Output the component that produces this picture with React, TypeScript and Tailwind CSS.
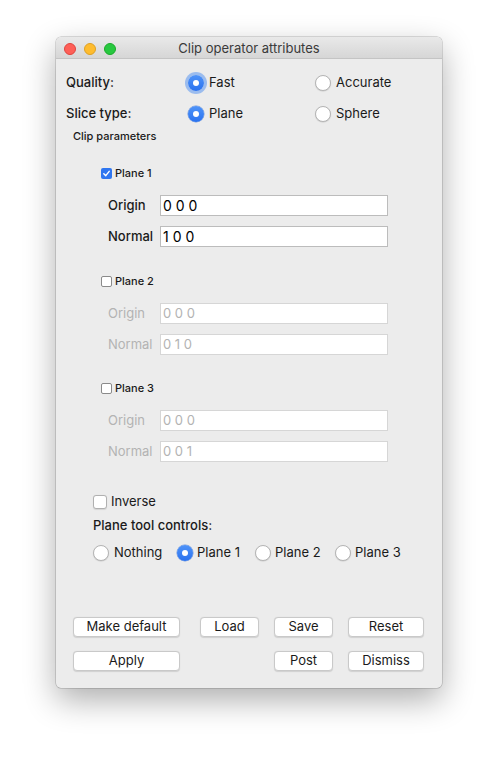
import React from "react";

const font = { fontFamily: "Inter, 'Liberation Sans', sans-serif" };

function Radio({ on, focus }: { on?: boolean; focus?: boolean }) {
  if (on) {
    return (
      <span
        className={
          "flex h-[16px] w-[16px] shrink-0 items-center justify-center rounded-full bg-gradient-to-b from-[#4f93f8] to-[#2a72ef] " +
          (focus ? "shadow-[0_0_0_3px_rgba(90,150,240,0.55)]" : "shadow-[0_0_0_0.5px_rgba(30,90,200,0.6)]")
        }
      >
        <span className="h-[6px] w-[6px] rounded-full bg-white" />
      </span>
    );
  }
  return (
    <span className="h-[16px] w-[16px] shrink-0 rounded-full border border-[#b4b4b4] bg-white shadow-[0_0.5px_1px_rgba(0,0,0,0.15)]" />
  );
}

function SmallCheck({ on }: { on?: boolean }) {
  if (on) {
    return (
      <span className="flex h-[11px] w-[11px] items-center justify-center rounded-[2px] bg-[#2f76f0]">
        <svg width="9" height="9" viewBox="0 0 10 10">
          <path d="M2 5.2 L4.2 7.4 L8 2.6" fill="none" stroke="white" strokeWidth="1.6" strokeLinecap="round" strokeLinejoin="round" />
        </svg>
      </span>
    );
  }
  return <span className="h-[11px] w-[11px] rounded-[2px] border border-[#8a8a8a] bg-white" />;
}

function Field({ label, value, enabled }: { label: string; value: string; enabled?: boolean }) {
  return (
    <div className="flex h-[21px] items-center">
      <span
        className={
          "w-[52px] pl-[52px] box-content text-[13px] " +
          (enabled ? "font-medium text-[#1a1a1a]" : "text-[#b3b3b3]")
        }
      >
        {label}
      </span>
      <div
        className={
          "flex h-[21px] w-[228px] items-center bg-white pl-[2px] " +
          (enabled ? "border border-[#bcbcbc] text-[14px] text-black" : "border border-[#d6d6d6] text-[13px] text-[#b3b3b3]")
        }
      >
        {value}
      </div>
    </div>
  );
}

function PlaneBlock({ name, origin, normal, on, top }: { name: string; origin: string; normal: string; on?: boolean; top: string }) {
  return (
    <div className={top}>
      <div className="flex h-[14px] items-center gap-[3px] pl-[45px]">
        <SmallCheck on={on} />
        <span className="text-[11px] font-medium text-[#1a1a1a]">{name}</span>
      </div>
      <div className="mt-[15px]">
        <Field label="Origin" value={origin} enabled={on} />
      </div>
      <div className="mt-[10px]">
        <Field label="Normal" value={normal} enabled={on} />
      </div>
    </div>
  );
}

function Btn({ label, w }: { label: string; w: string }) {
  return (
    <div
      className={
        "flex h-[20px] items-center justify-center rounded-[4px] border border-[#c9c9c9] bg-white text-[13px] text-[#1a1a1a] shadow-[0_0.5px_1px_rgba(0,0,0,0.12)] " +
        w
      }
    >
      {label}
    </div>
  );
}

export default function App() {
  return (
    <div className="min-h-[762px] bg-white pl-[56px] pt-[37px]" style={font}>
      <div className="flex h-[651px] w-[386px] flex-col overflow-hidden rounded-[5px] bg-[#ececec] shadow-[0_0_0_0.5px_rgba(0,0,0,0.25),0_12px_32px_rgba(0,0,0,0.32)]">
        {/* title bar */}
        <div className="relative flex h-[22px] shrink-0 items-center justify-center border-b border-[#c4c4c4] bg-gradient-to-b from-[#e9e9e9] to-[#d6d6d6] pt-[3px]">
          <div className="absolute left-[8px] top-[6px] flex gap-[8px]">
            <span className="h-[12px] w-[12px] rounded-full border border-[#e0443e] bg-[#fe5f57]" />
            <span className="h-[12px] w-[12px] rounded-full border border-[#dea123] bg-[#febc2e]" />
            <span className="h-[12px] w-[12px] rounded-full border border-[#1aab29] bg-[#28c840]" />
          </div>
          <span className="text-[13px] text-[#3a3a3a]">Clip operator attributes</span>
        </div>

        <div className="flex flex-col">
          {/* quality */}
          <div className="mt-[13px] flex h-[22px] items-center text-[13px] text-[#1a1a1a]">
            <span className="w-[132px] pl-[10px] font-medium">Quality:</span>
            <div className="flex w-[127px] items-center gap-[5px]">
              <Radio on focus />
              <span>Fast</span>
            </div>
            <div className="flex items-center gap-[5px]">
              <Radio />
              <span>Accurate</span>
            </div>
          </div>
          {/* slice type */}
          <div className="mt-[9px] flex h-[22px] items-center text-[13px] text-[#1a1a1a]">
            <span className="w-[132px] pl-[10px] font-medium">Slice type:</span>
            <div className="flex w-[127px] items-center gap-[5px]">
              <Radio on />
              <span>Plane</span>
            </div>
            <div className="flex items-center gap-[5px]">
              <Radio />
              <span>Sphere</span>
            </div>
          </div>
          <div className="mt-[4px] flex h-[14px] items-center pl-[17px] text-[11px] font-medium text-[#1a1a1a]">
            Clip parameters
          </div>

          <PlaneBlock top="mt-[23px]" name="Plane 1" origin="0 0 0" normal="1 0 0" on />
          <PlaneBlock top="mt-[27px]" name="Plane 2" origin="0 0 0" normal="0 1 0" />
          <PlaneBlock top="mt-[26px]" name="Plane 3" origin="0 0 0" normal="0 0 1" />

          {/* inverse */}
          <div className="mt-[32px] flex h-[16px] items-center gap-[4px] pl-[37px] text-[13px] text-[#1a1a1a]">
            <span className="h-[14px] w-[14px] rounded-[3px] border border-[#b0b0b0] bg-white shadow-[0_0.5px_1px_rgba(0,0,0,0.1)]" />
            <span>Inverse</span>
          </div>
          <div className="mt-[8px] flex h-[16px] items-center pl-[37px] text-[13px] font-medium text-[#1a1a1a]">
            Plane tool controls:
          </div>
          <div className="mt-[10px] flex h-[18px] items-center pl-[37px] text-[13px] text-[#1a1a1a]">
            <div className="flex w-[84px] items-center gap-[5px]">
              <Radio />
              <span>Nothing</span>
            </div>
            <div className="flex w-[78px] items-center gap-[4px]">
              <Radio on />
              <span>Plane 1</span>
            </div>
            <div className="flex w-[80px] items-center gap-[4px]">
              <Radio />
              <span>Plane 2</span>
            </div>
            <div className="flex items-center gap-[4px]">
              <Radio />
              <span>Plane 3</span>
            </div>
          </div>

          {/* buttons */}
          <div className="mt-[55px] flex pl-[17px]">
            <Btn label="Make default" w="w-[107px]" />
            <div className="ml-[20px]"><Btn label="Load" w="w-[59px]" /></div>
            <div className="ml-[15px]"><Btn label="Save" w="w-[59px]" /></div>
            <div className="ml-[15px]"><Btn label="Reset" w="w-[76px]" /></div>
          </div>
          <div className="mt-[14px] flex pl-[17px]">
            <Btn label="Apply" w="w-[107px]" />
            <div className="ml-[94px]"><Btn label="Post" w="w-[59px]" /></div>
            <div className="ml-[15px]"><Btn label="Dismiss" w="w-[76px]" /></div>
          </div>
        </div>
      </div>
    </div>
  );
}
